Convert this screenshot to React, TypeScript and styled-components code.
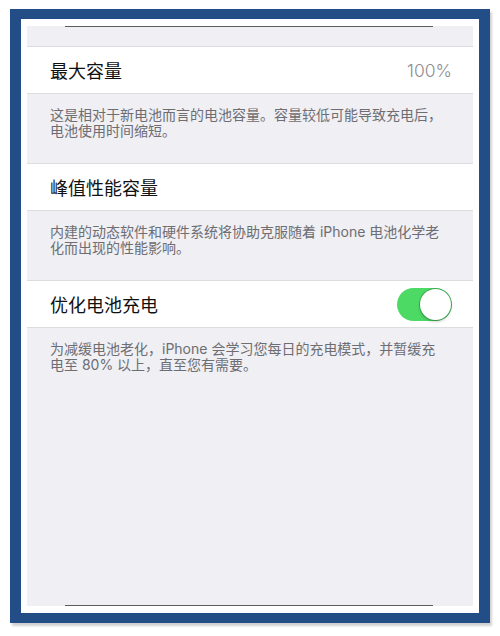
import { useState } from 'react';
import styled, { createGlobalStyle } from 'styled-components';

const GlobalStyle = createGlobalStyle`
  html, body {
    margin: 0;
    padding: 0;
    background: #ffffff;
  }
  body {
    font-family: "Inter", "Noto Sans CJK SC", sans-serif;
    -webkit-font-smoothing: antialiased;
  }
`;

interface Section {
  title: string;
  value?: string;
  toggle?: boolean;
  note: string;
}

const sections: Section[] = [
  {
    title: '最大容量',
    value: '100%',
    note: '这是相对于新电池而言的电池容量。容量较低可能导致充电后，电池使用时间缩短。',
  },
  {
    title: '峰值性能容量',
    note: '内建的动态软件和硬件系统将协助克服随着 iPhone 电池化学老化而出现的性能影响。',
  },
  {
    title: '优化电池充电',
    toggle: true,
    note: '为减缓电池老化，iPhone 会学习您每日的充电模式，并暂缓充电至 80% 以上，直至您有需要。',
  },
];

export default function App() {
  const [charging, setCharging] = useState(true);

  return (
    <>
      <GlobalStyle />
      <Page>
        <Frame>
          <Screen>
            <EdgeLine />
            <TopBand />
            {sections.map((item, index) => (
              <div key={index}>
                <Row>
                  <Title>{item.title}</Title>
                  {item.value && <Value>{item.value}</Value>}
                  {item.toggle && (
                    <Switch $on={charging} onClick={() => setCharging(!charging)}>
                      <Knob />
                    </Switch>
                  )}
                </Row>
                <Note $last={index === sections.length - 1}>{item.note}</Note>
              </div>
            ))}
            <Filler />
            <EdgeLine />
          </Screen>
        </Frame>
      </Page>
    </>
  );
}

const Page = styled.div`
  width: 500px;
  height: 636px;
  padding: 9px 0 0 10px;
  box-sizing: border-box;
`;

const Frame = styled.div`
  width: 480px;
  height: 614px;
  box-sizing: border-box;
  border: solid #224d87;
  border-width: 10px 11px;
  padding: 7px 6px;
  background: #ffffff;
  box-shadow: 2px 3px 2px rgba(0, 0, 0, 0.18);
  display: flex;
`;

const Screen = styled.div`
  flex: 1;
  display: flex;
  flex-direction: column;
  background: #efeff4;
`;

const EdgeLine = styled.div`
  height: 1px;
  margin: 0 40px 0 38px;
  background: #5c5c60;
  flex-shrink: 0;
`;

const TopBand = styled.div`
  height: 19px;
  border-bottom: 1px solid #dcdce1;
`;

const Row = styled.div`
  height: 46px;
  background: #ffffff;
  display: flex;
  align-items: center;
  justify-content: space-between;
  padding: 0 21px 0 23px;
  border-bottom: 1px solid #dcdce1;
`;

const Title = styled.span`
  font-size: 18px;
  color: #111111;
`;

const Value = styled.span`
  font-size: 17.5px;
  font-weight: 300;
  color: #8e8e93;
`;

const Switch = styled.div<{ $on: boolean }>`
  width: 55px;
  height: 33px;
  border-radius: 17px;
  background: ${(p) => (p.$on ? '#4cd964' : '#e5e5ea')};
  display: flex;
  align-items: center;
  justify-content: ${(p) => (p.$on ? 'flex-end' : 'flex-start')};
  padding: 0 1px;
  box-sizing: border-box;
  cursor: pointer;
`;

const Knob = styled.div`
  width: 31px;
  height: 31px;
  border-radius: 50%;
  background: #ffffff;
  box-shadow: 0 0 0 1px rgba(40, 90, 50, 0.35), 0 2px 3px rgba(0, 0, 0, 0.18);
`;

const Note = styled.p<{ $last?: boolean }>`
  margin: 0;
  padding: 13px 26px 24px 23px;
  font-size: 14px;
  line-height: 16px;
  color: #6d6d72;
  border-bottom: ${(p) => (p.$last ? 'none' : '1px solid #dcdce1')};
`;

const Filler = styled.div`
  flex: 1;
`;
